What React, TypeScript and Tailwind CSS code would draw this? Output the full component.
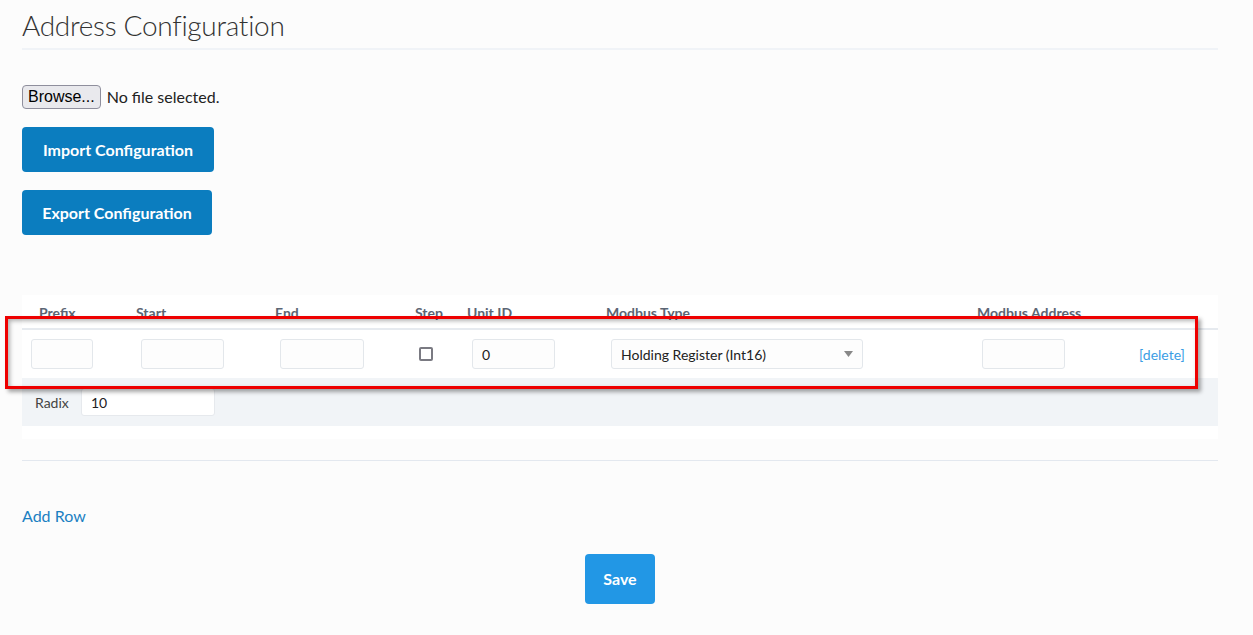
const font = { fontFamily: "Lato, 'Open Sans', sans-serif" };

const cols = "grid grid-cols-[106px_139px_140px_52px_139px_371px_151px_98px]";
const field = "block h-[30px] rounded-[3px] border border-[#e3e7eb] bg-[#fdfdfd] px-[9px] text-[14px] text-[#222]";

const App = () => {
  return (
    <div className="relative min-h-[635px] bg-[#fcfcfc] text-[#333]" style={font}>
      <div className="px-[22px] pr-[35px]">
        <h1 className="pt-[8px] pb-[6px] text-[28px] font-light leading-[34px] tracking-[-0.3px] text-[#333] border-b-2 border-[#f0f3f7]">
          Address Configuration
        </h1>

        <div className="mt-[35px] flex items-center gap-[6px] h-[24px]">
          <button
            className="h-[24px] px-[5px] rounded-[4px] border border-[#8f8f9d] bg-[#e9e9ed] text-[16px] text-black leading-none"
            style={{ fontFamily: "'Liberation Sans', Arial, sans-serif" }}
          >
            Browse...
          </button>
          <span className="text-[16px] text-[#222]">No file selected.</span>
        </div>

        <button className="mt-[18px] block h-[45px] w-[192px] rounded-[4px] bg-[#0b7dbf] text-[16px] font-bold text-white">
          Import Configuration
        </button>
        <button className="mt-[18px] block h-[45px] w-[190px] rounded-[4px] bg-[#0b7dbf] text-[16px] font-bold text-white">
          Export Configuration
        </button>

        <div className="mt-[60px] bg-white pt-[9px] pb-[13px]">
          <div className={`${cols} border-b-2 border-[#e6eaef] pb-[6px] text-[14px] font-bold text-[#5b6574] leading-[18px]`}>
            <div className="pl-[17px]">Prefix</div>
            <div className="pl-[8px]">Start</div>
            <div className="pl-[8px]">End</div>
            <div className="pl-[8px]">Step</div>
            <div className="pl-[8px]">Unit ID</div>
            <div className="pl-[8px]">Modbus Type</div>
            <div className="pl-[8px]">Modbus Address</div>
            <div></div>
          </div>

          <div className={`${cols} items-center h-[48px] text-[14px]`}>
            <div className="pl-[9px]">
              <input className={`${field} w-[62px]`} />
            </div>
            <div className="pl-[13px]">
              <input className={`${field} w-[83px]`} />
            </div>
            <div className="pl-[13px]">
              <input className={`${field} w-[84px]`} />
            </div>
            <div className="pl-[12px]">
              <div className="h-[14px] w-[14px] rounded-[2px] border-2 border-[#7a7a82] bg-white"></div>
            </div>
            <div className="pl-[13px]">
              <input defaultValue="0" className={`${field} w-[83px]`} />
            </div>
            <div className="pl-[13px]">
              <div className="flex h-[30px] w-[252px] items-center justify-between rounded-[3px] border border-[#e3e7eb] bg-[#fdfdfd] px-[9px] text-[14px] text-[#222]">
                <span>Holding Register (Int16)</span>
                <svg width="9" height="6" viewBox="0 0 9 6">
                  <path d="M0 0h9L4.5 6z" fill="#888" />
                </svg>
              </div>
            </div>
            <div className="pl-[13px]">
              <input className={`${field} w-[83px]`} />
            </div>
            <div className="pl-[19px]">
              <a className="text-[14px] text-[#3a9de4]">[delete]</a>
            </div>
          </div>

          <div className="flex h-[48px] items-center bg-[#f1f4f7] pl-[13px] text-[14px]">
            <span className="w-[46px] text-[#444]">Radix</span>
            <input
              defaultValue="10"
              className="block h-[28px] w-[134px] rounded-[3px] border border-[#e6e9ed] bg-white px-[9px] text-[14px] text-[#222]"
            />
          </div>
        </div>

        <div className="mt-[21px] border-t border-[#e3e8ef]"></div>

        <div className="mt-[45px] text-[16px] leading-[20px] text-[#1b80c2]">Add Row</div>

        <div className="mt-[28px] flex justify-center">
          <button className="h-[50px] w-[70px] rounded-[4px] bg-[#2297e5] text-[16px] font-bold text-white">Save</button>
        </div>
      </div>

      <div className="pointer-events-none absolute left-[5px] top-[316px] h-[73px] w-[1193px] border-[3px] border-[#ee0000] shadow-[3px_3px_4px_rgba(0,0,0,0.35),inset_2px_2px_4px_rgba(0,0,0,0.3)]"></div>
    </div>
  );
};

export default App;
